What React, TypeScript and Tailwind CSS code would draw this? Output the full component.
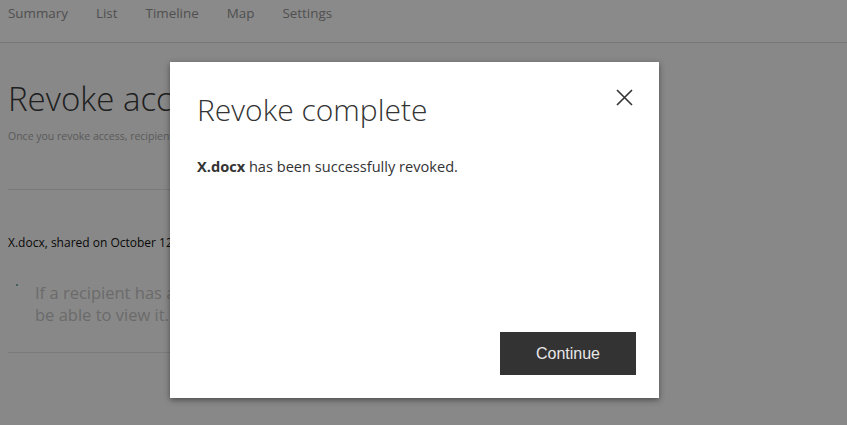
export default function App() {
  const tabs = ['Summary', 'List', 'Timeline', 'Map', 'Settings']

  return (
    <div
      className="relative h-[425px] w-full overflow-hidden bg-[#fbfbfb]"
      style={{ fontFamily: '"Open Sans", "Noto Sans", sans-serif' }}
    >
      {/* page behind the dialog */}
      <header className="flex h-[43px] items-start gap-7 border-b border-[#dcdcdc] bg-white px-2 pt-[3px] text-[13.4px] text-[#949494]">
        {tabs.map((t) => (
          <span key={t}>{t}</span>
        ))}
      </header>

      <main className="px-2">
        <h1 className="mt-[34px] text-[33px] leading-[44px] font-light text-[#3a3a3a]">
          Revoke access
        </h1>
        <p className="mt-[8px] text-[10.5px] text-[#a8a8a8]">
          Once you revoke access, recipients will no longer be able to open this file.
        </p>
        <hr className="mt-[44px] w-[620px] border-[#e4e4e4]" />
        <p className="mt-[44px] text-[12px] text-[#111]">
          X.docx, shared on October 12, 2017
        </p>
        <div className="mt-[30px] flex gap-[17px]">
          <span className="mt-[2px] ml-[8px] h-[2px] w-[2px] shrink-0 bg-[#7fb0b0]" />
          <p className="text-[16.5px] leading-[22px] text-[#c6c6c6]">
            If a recipient has already downloaded the file, they may still
            <br />
            be able to view it.
          </p>
        </div>
        <hr className="mt-[26px] w-[620px] border-[#e4e4e4]" />
      </main>

      {/* overlay */}
      <div className="absolute inset-0 bg-black/[0.46] pt-[62px] pl-[170px]">
        <div className="flex h-[336px] w-[489px] flex-col bg-white px-[27px] pb-[23px] shadow-[0_2px_6px_rgba(0,0,0,0.45)]">
          <div className="flex items-start justify-between pt-[26px]">
            <h2 className="text-[30px] leading-[44px] font-light text-[#333]">
              Revoke complete
            </h2>
            <button className="mt-[1px] mr-[-1px] p-0 text-[#333]">
              <svg width="17" height="17" viewBox="0 0 17 17">
                <path d="M1 1 L16 16 M16 1 L1 16" stroke="currentColor" strokeWidth="1.6" />
              </svg>
            </button>
          </div>
          <p className="mt-[24px] text-[14.6px] text-[#333]">
            <span className="font-bold">X.docx</span> has been successfully revoked.
          </p>
          <div className="mt-auto flex justify-end">
            <button
              className="mr-[-4px] h-[43px] w-[136px] bg-[#333] text-[16px] text-[#e8e8e8]"
              style={{ fontFamily: '"Liberation Sans", Arial, sans-serif' }}
            >
              Continue
            </button>
          </div>
        </div>
      </div>
    </div>
  )
}
